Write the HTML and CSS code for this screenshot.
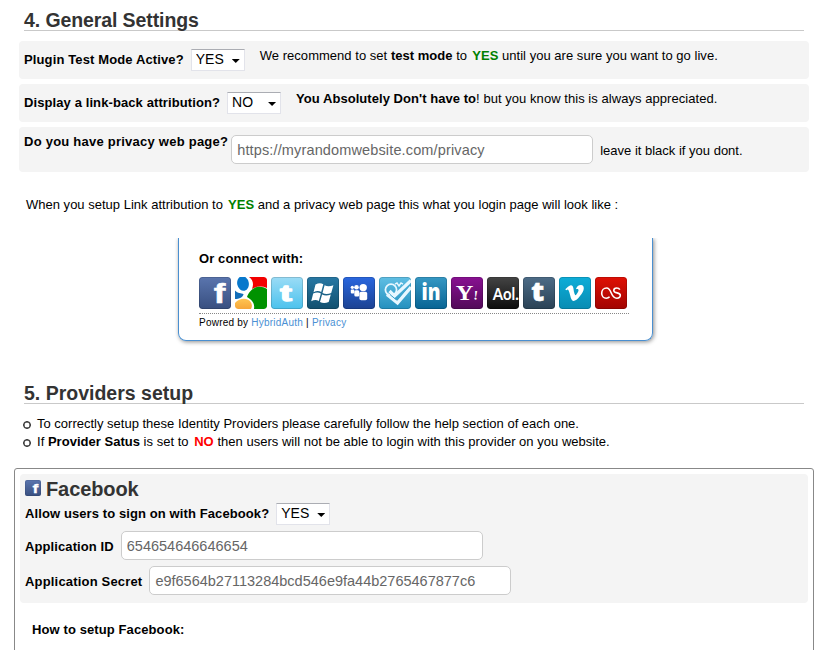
FILE: index.html
```html
<!DOCTYPE html>
<html lang="en">
<head>
<meta charset="utf-8">
<title>Settings</title>
<link rel="stylesheet" href="styles.css">
</head>
<body>
<main class="page">
  <h3 class="section-title first"><span class="t-general">4. General Settings</span></h3>

  <div class="row">
    <label class="label l-test" for="test">Plugin Test Mode Active?</label>
    <span class="select"><select id="test"><option>YES</option><option>NO</option></select></span>
    <span class="hint h-test">We recommend to set <b>test mode</b> to <b class="yes">YES</b> until you are sure you want to go live.</span>
  </div>
  <div class="row">
    <label class="label l-link" for="link">Display a link-back attribution?</label>
    <span class="select"><select id="link"><option>NO</option><option>YES</option></select></span>
    <span class="hint h-link"><b>You Absolutely Don't have to</b>! but you know this is always appreciated.</span>
  </div>
  <div class="row tall">
    <label class="label l-privacy" for="privacy">Do you have privacy web page?</label>
    <input class="field f-privacy" id="privacy" type="text" value="https://myrandomwebsite.com/privacy">
    <span class="hint h-privacy">leave it black if you dont.</span>
  </div>

  <p class="intro"><span class="t-intro">When you setup Link attribution to <b class="yes">YES</b> and a privacy web page this what you login page will look like :</span></p>

  <div class="preview-clip">
    <section class="preview">
      <div class="preview-title"><span class="t-connect">Or connect with:</span></div>
      <div class="icons">
        <svg viewBox="0 0 32 32"><defs>
          <linearGradient id="fb" x2="0" y2="1"><stop stop-color="#5a75ae"/><stop offset="1" stop-color="#384f80"/></linearGradient>
          <linearGradient id="tw" x2="0" y2="1"><stop stop-color="#9bdcf6"/><stop offset="1" stop-color="#4bc2ed"/></linearGradient>
          <linearGradient id="wn" x2="0" y2="1"><stop stop-color="#2878a4"/><stop offset="1" stop-color="#11506f"/></linearGradient>
          <linearGradient id="ms" x2="0" y2="1"><stop stop-color="#2a67df"/><stop offset="1" stop-color="#1c4292"/></linearGradient>
          <linearGradient id="fs" x2="0" y2="1"><stop stop-color="#60bfe4"/><stop offset="1" stop-color="#2490be"/></linearGradient>
          <linearGradient id="li" x2="0" y2="1"><stop stop-color="#3698c4"/><stop offset="1" stop-color="#076494"/></linearGradient>
          <linearGradient id="ya" x2="0" y2="1"><stop stop-color="#891192"/><stop offset="1" stop-color="#510a58"/></linearGradient>
          <linearGradient id="ao" x2="0" y2="1"><stop stop-color="#444"/><stop offset="1" stop-color="#0d0d0d"/></linearGradient>
          <linearGradient id="tu" x2="0" y2="1"><stop stop-color="#4d6c87"/><stop offset="1" stop-color="#2a4255"/></linearGradient>
          <linearGradient id="vi" x2="0" y2="1"><stop stop-color="#0dadd8"/><stop offset="1" stop-color="#088cb3"/></linearGradient>
          <linearGradient id="lf" x2="0" y2="1"><stop stop-color="#df1005"/><stop offset="1" stop-color="#a20401"/></linearGradient>
          <linearGradient id="yl" x2="0" y2="1"><stop stop-color="#ffc552"/><stop offset="1" stop-color="#f6a63a"/></linearGradient>
          <clipPath id="tile"><rect width="32" height="32" rx="3"/></clipPath>
        </defs>
          <rect width="32" height="32" rx="3" fill="url(#fb)"/><rect class="edge" x=".5" y=".5" width="31" height="31" rx="2.5"/>
          <text class="g-fb" transform="translate(14.800 25.800) scale(1.300 1)">f</text></svg>
        <svg viewBox="0 0 32 32"><g clip-path="url(#tile)">
          <rect width="32" height="32" fill="#fff"/>
          <path d="M14 0h18v11C27 9 22 9 17 12C19 7 18 3 14 0z" fill="#f20000"/>
          <path d="M12 20C15 11 24 7 32 12v20H19C20 26 17 23 12 20z" fill="#009200"/>
          <ellipse cx="8" cy="6.500" rx="5.800" ry="7.400" transform="rotate(-12 8 6.500)" fill="#0878cc"/>
          <path d="M0 13.500C3 16.500 6 16 8.500 17C8.500 20 4 22 0 22z" fill="#126eb9"/>
          <path d="M0 26C5 20.500 13 20.500 16 25.500C18 29 16 32 16 32H0z" fill="url(#yl)"/></g></svg>
        <svg viewBox="0 0 32 32"><rect width="32" height="32" rx="3" fill="url(#tw)"/><rect class="edge" x=".5" y=".5" width="31" height="31" rx="2.5"/>
          <text class="g-tw" transform="translate(9.300 24.300) scale(1.500 1)">t</text></svg>
        <svg viewBox="0 0 32 32"><rect width="32" height="32" rx="3" fill="url(#wn)"/><rect class="edge" x=".5" y=".5" width="31" height="31" rx="2.5"/>
          <g fill="#fff"><path d="M8.500 7.600C11.500 6 14 6 16.300 7.300L14.200 15C12 13.800 9.500 13.800 6.500 15.200z"/><path d="M17.600 8.300C20 9.600 23 9.600 26.400 8.300L24.200 16C21 17.400 18 17.400 15.500 16z"/><path d="M6.200 16.600C9 15.200 11.600 15.200 13.900 16.500L11.800 24C9.500 22.700 7 22.900 4.200 24.200z"/><path d="M15.100 17.400C17.500 18.700 20.500 18.700 23.800 17.400L21.700 25C18.500 26.300 15.500 26.300 13 24.900z"/></g></svg>
        <svg viewBox="0 0 32 32"><rect width="32" height="32" rx="3" fill="url(#ms)"/><rect class="edge" x=".5" y=".5" width="31" height="31" rx="2.5"/>
          <g fill="#fff"><circle cx="9.300" cy="10.300" r="1.600"/><rect x="7.800" y="12.400" width="3.500" height="4" rx="1"/><circle cx="13.500" cy="10.300" r="2.300"/><rect x="11.300" y="13.200" width="5" height="6.200" rx="1.500"/><circle cx="20.200" cy="10.600" r="3.700"/><rect x="16.400" y="14.800" width="7.800" height="8.500" rx="1.800"/></g></svg>
        <svg viewBox="0 0 32 32"><rect width="32" height="32" rx="3" fill="url(#fs)"/><rect class="edge" x=".5" y=".5" width="31" height="31" rx="2.500"/>
          <g fill="none" stroke="#e7f7ff"><circle cx="12" cy="12.800" r="5.600" stroke-width="1.800"/><path d="M16 7.200l2-1.200 2 3 2-3 2 1.200" stroke-width="1.400"/><path d="M10.500 14l5 5L32 3.500" stroke-width="3.200"/><path d="M8 17.500l10.500 8.500L32 10" stroke-width="3.400"/><path d="M11 17.500l6.500 5.500L32 7" stroke="#3ca1cc" stroke-width="1"/></g></svg>
        <svg viewBox="0 0 32 32"><rect width="32" height="32" rx="3" fill="url(#li)"/><rect class="edge" x=".5" y=".5" width="31" height="31" rx="2.500"/>
          <text class="g-li" x="6.500" y="23" textLength="19" lengthAdjust="spacingAndGlyphs">in</text></svg>
        <svg viewBox="0 0 32 32"><rect width="32" height="32" rx="3" fill="url(#ya)"/><rect class="edge" x=".5" y=".5" width="31" height="31" rx="2.500"/>
          <text class="g-ya" transform="translate(4.800 22.800) scale(1.220 1)">Y</text><text class="g-ex" x="22.300" y="22.500" transform="rotate(5 24 22)">!</text></svg>
        <svg viewBox="0 0 32 32"><rect width="32" height="32" rx="3" fill="url(#ao)"/><rect class="edge" x=".5" y=".5" width="31" height="31" rx="2.500"/>
          <text class="g-ao" x="5.800" y="23" textLength="26" lengthAdjust="spacingAndGlyphs">Aol.</text></svg>
        <svg viewBox="0 0 32 32"><rect width="32" height="32" rx="3" fill="url(#tu)"/><rect class="edge" x=".5" y=".5" width="31" height="31" rx="2.500"/>
          <text class="g-tu" transform="translate(8.300 24.300) scale(1.080 1)">t</text></svg>
        <svg viewBox="0 0 32 32"><rect width="32" height="32" rx="3" fill="url(#vi)"/><rect class="edge" x=".5" y=".5" width="31" height="31" rx="2.500"/>
          <path fill="#fff" transform="translate(6.300 6.700) scale(.77)" d="M23.977 6.416c-.105 2.338-1.739 5.543-4.894 9.609-3.268 4.247-6.026 6.370-8.290 6.370-1.409 0-2.578-1.294-3.553-3.881L5.322 11.400C4.603 8.816 3.834 7.522 3.010 7.522c-.179 0-.806.378-1.881 1.132L0 7.197c1.185-1.044 2.351-2.084 3.501-3.128C5.080 2.701 6.266 1.984 7.055 1.910c1.867-.180 3.016 1.100 3.447 3.838.465 2.953.789 4.789.971 5.507.539 2.450 1.131 3.674 1.776 3.674.502 0 1.256-.796 2.265-2.385 1.004-1.589 1.540-2.797 1.612-3.628.144-1.371-.395-2.061-1.614-2.061-.574 0-1.167.121-1.777.391 1.186-3.868 3.434-5.757 6.762-5.637 2.473.060 3.628 1.664 3.480 4.807z"/></svg>
        <svg viewBox="0 0 32 32"><rect width="32" height="32" rx="3" fill="url(#lf)"/><rect class="edge" x=".5" y=".5" width="31" height="31" rx="2.500"/>
          <path d="M14.600 19.800C13.500 21 12.500 21.200 11.300 21.200C8.500 21.200 6.700 19 6.700 16.200C6.700 13.200 8.700 11 11.700 11C16.800 11 15.500 21.200 21.800 21.200C24 21.200 25.300 20 25.300 18.300C25.300 14.800 18.800 17 18.800 13.500C18.800 12 20 11 21.700 11C23.200 11 24.200 11.500 24.800 12.700" fill="none" stroke="#fff" stroke-width="1.600"/></svg>
      </div>
      <div class="powered"><span class="t-powered">Powred by <a>HybridAuth</a> | <a>Privacy</a></span></div>
    </section>
  </div>

  <h3 class="section-title second"><span class="t-providers">5. Providers setup</span></h3>
  <ul class="notes">
    <li><span class="n-1">To correctly setup these Identity Providers please carefully follow the help section of each one.</span></li>
    <li><span class="n-2">If <b>Provider Satus</b> is set to <b class="no">NO</b> then users will not be able to login with this provider on you website.</span></li>
  </ul>

  <section class="provider">
    <div class="provider-box">
      <h4 class="provider-name">
        <svg viewBox="0 0 32 32"><rect width="32" height="32" rx="4" fill="url(#fb)"/><rect class="edge" x="1" y="1" width="30" height="30" rx="3"/><text class="g-fb" transform="translate(14.800 25.800) scale(1.300 1)">f</text></svg>
        <span class="t-facebook">Facebook</span>
      </h4>
      <div class="line">
        <label class="label l-allow" for="fbon">Allow users to sign on with Facebook?</label>
        <span class="select"><select id="fbon"><option>YES</option><option>NO</option></select></span>
      </div>
      <div class="line input-line">
        <label class="label l-id" for="appid">Application ID</label>
        <input class="field" id="appid" type="text" value="654654646646654">
      </div>
      <div class="line input-line">
        <label class="label l-secret" for="secret">Application Secret</label>
        <input class="field" id="secret" type="text" value="e9f6564b27113284bcd546e9fa44b2765467877c6">
      </div>
    </div>
    <div class="howto"><span class="t-howto">How to setup Facebook:</span></div>
  </section>
</main>
</body>
</html>
```
FILE: styles.css
```css
* { box-sizing: border-box; }
html, body { margin: 0; height: 650px; overflow: hidden; background: #fff; }
body { font: 13px/18px "Liberation Sans", Arial, sans-serif; color: #000; }
.page { width: 840px; height: 650px; overflow: hidden; padding: 10px 26px 0 14px; }
span, label { white-space: nowrap; }
.section-title { margin: 0 10px; height: 21px; border-bottom: 1px solid #c9c9c9; color: #333; font-size: 19.5px; line-height: 20px; }
.first { margin-bottom: 10px; }
.row { display: flex; align-items: flex-start; height: 38px; margin: 0 5px 5px; padding: 8px 5px 0; background: #f4f4f4; border-radius: 4px; }
.row .label { padding-top: 2px; margin-right: 7px; }
.row.tall { height: 45px; }
.row.tall .label { padding-top: 0; margin: -2px 3px 0 0; }
.label { flex: none; font-weight: bold; }
.hint { margin: -2px 0 0 15px; }
.h-privacy { margin: 7px 0 0 7px; }
.yes { margin-left: 1.5px; color: #008000; }
.no { margin-left: 2px; color: #f00; }

/* tracking per text run */
.t-general { letter-spacing: -.1px; }
.t-facebook { letter-spacing: -.1px; }
.l-test { letter-spacing: .125px; }
.l-link { letter-spacing: .1px; }
.l-privacy { letter-spacing: .24px; }
.h-test { letter-spacing: .03px; }
.h-link { letter-spacing: .05px; }
.t-intro { letter-spacing: .01px; }
.t-connect { letter-spacing: .1px; }
.t-powered { letter-spacing: .23px; }
.n-2 { letter-spacing: .02px; }
.l-allow { letter-spacing: .1px; }
.l-id { letter-spacing: .1px; }
.l-secret { letter-spacing: .18px; }
.t-howto { letter-spacing: .1px; }

.select { position: relative; flex: none; display: block; width: 54px; height: 22px; }
.select select { appearance: none; display: block; width: 54px; height: 22px; margin: 0; padding: 0 0 2px 4px; border: 1px solid #e2e3ea; border-top-color: #abadb3; border-radius: 0; background: #fff; color: #000; font: 14px/18px "Liberation Sans", Arial, sans-serif; }
.select::after { content: ""; position: absolute; left: 41px; top: 10px; width: 8px; height: 4px; background: #000; clip-path: polygon(0 0, 100% 0, 50% 100%); }
.field { flex: none; width: 362px; height: 29px; margin: 0; padding: 1px 5px 0; border: 1px solid #ccc; border-radius: 5px; background: #fff; color: #666; font: 14.5px "Liberation Sans", Arial, sans-serif; }
.f-privacy { letter-spacing: .14px; }
.intro { margin: 24px 0 0 12px; height: 18px; }
.preview-clip { margin-top: 24px; height: 111px; padding-left: 164px; overflow: hidden; }
.preview { width: 475px; height: 103px; padding: 12px 23px 0 20px; border: solid #4a8fd0; border-width: 0 1px 1px; border-radius: 0 0 8px 8px; box-shadow: 1px 1px 4px rgba(0,0,0,.45); }
.preview-title { height: 27px; font-weight: bold; line-height: 18px; }
.icons { display: flex; gap: 4px; width: 430px; height: 37px; border-bottom: 1px dotted #888; }
.icons svg { flex: none; width: 32px; height: 32px; border-radius: 3px; }
.edge { fill: none; stroke: #000; stroke-opacity: .15; }
svg text { fill: #fff; font-family: "Liberation Sans", Arial, sans-serif; font-weight: bold; }
svg .g-fb { font-size: 27px; stroke: #fff; stroke-width: .5px; }
svg .g-tw { font-size: 23px; stroke: #fff; stroke-width: 1.5px; stroke-linejoin: round; }
svg .g-li { font-family: "Open Sans", sans-serif; font-weight: 800; font-size: 22px; }
svg .g-ya { font-family: "Liberation Serif", serif; font-size: 20px; }
svg .g-ex { font-family: "Liberation Serif", serif; font-size: 13px; }
svg .g-ao { font-family: Lato, sans-serif; font-size: 17px; }
svg .g-tu { font-family: "Open Sans", sans-serif; font-weight: 800; font-size: 26px; stroke: #fff; stroke-width: .5px; }
.powered { font-size: 10px; line-height: 18px; }
.powered a { color: #4a90d4; }
.second { margin-top: 34px; }
.notes { margin: 11px 0 0; padding: 0 0 0 23px; list-style: none; }
.notes li { position: relative; height: 18px; }
.notes li::before { content: ""; position: absolute; left: -14px; top: 6px; width: 6px; height: 6px; border: 1px solid #222; box-shadow: inset 0 0 0 .5px #222; border-radius: 50%; }
.provider { margin-top: 17px; height: 220px; width: 800px; padding: 5px; border: 1px solid #888; border-radius: 3px; }
.provider-box { height: 129px; padding: 5px 5px 0; background: #f4f4f4; border-radius: 4px; }
.provider-name { display: flex; gap: 5px; height: 24px; margin: 0; color: #333; font-size: 20px; line-height: 20px; }
.provider-name svg { width: 16px; height: 16px; margin-top: 1px; }
.line { display: flex; height: 28px; }
.line .select { margin-left: 7px; }
.line .label { padding-top: 2px; }
.input-line { height: 35px; }
.input-line .label { padding-top: 7px; margin-right: 7px; }
.howto { padding: 18px 0 0 12px; font-weight: bold; }
```
